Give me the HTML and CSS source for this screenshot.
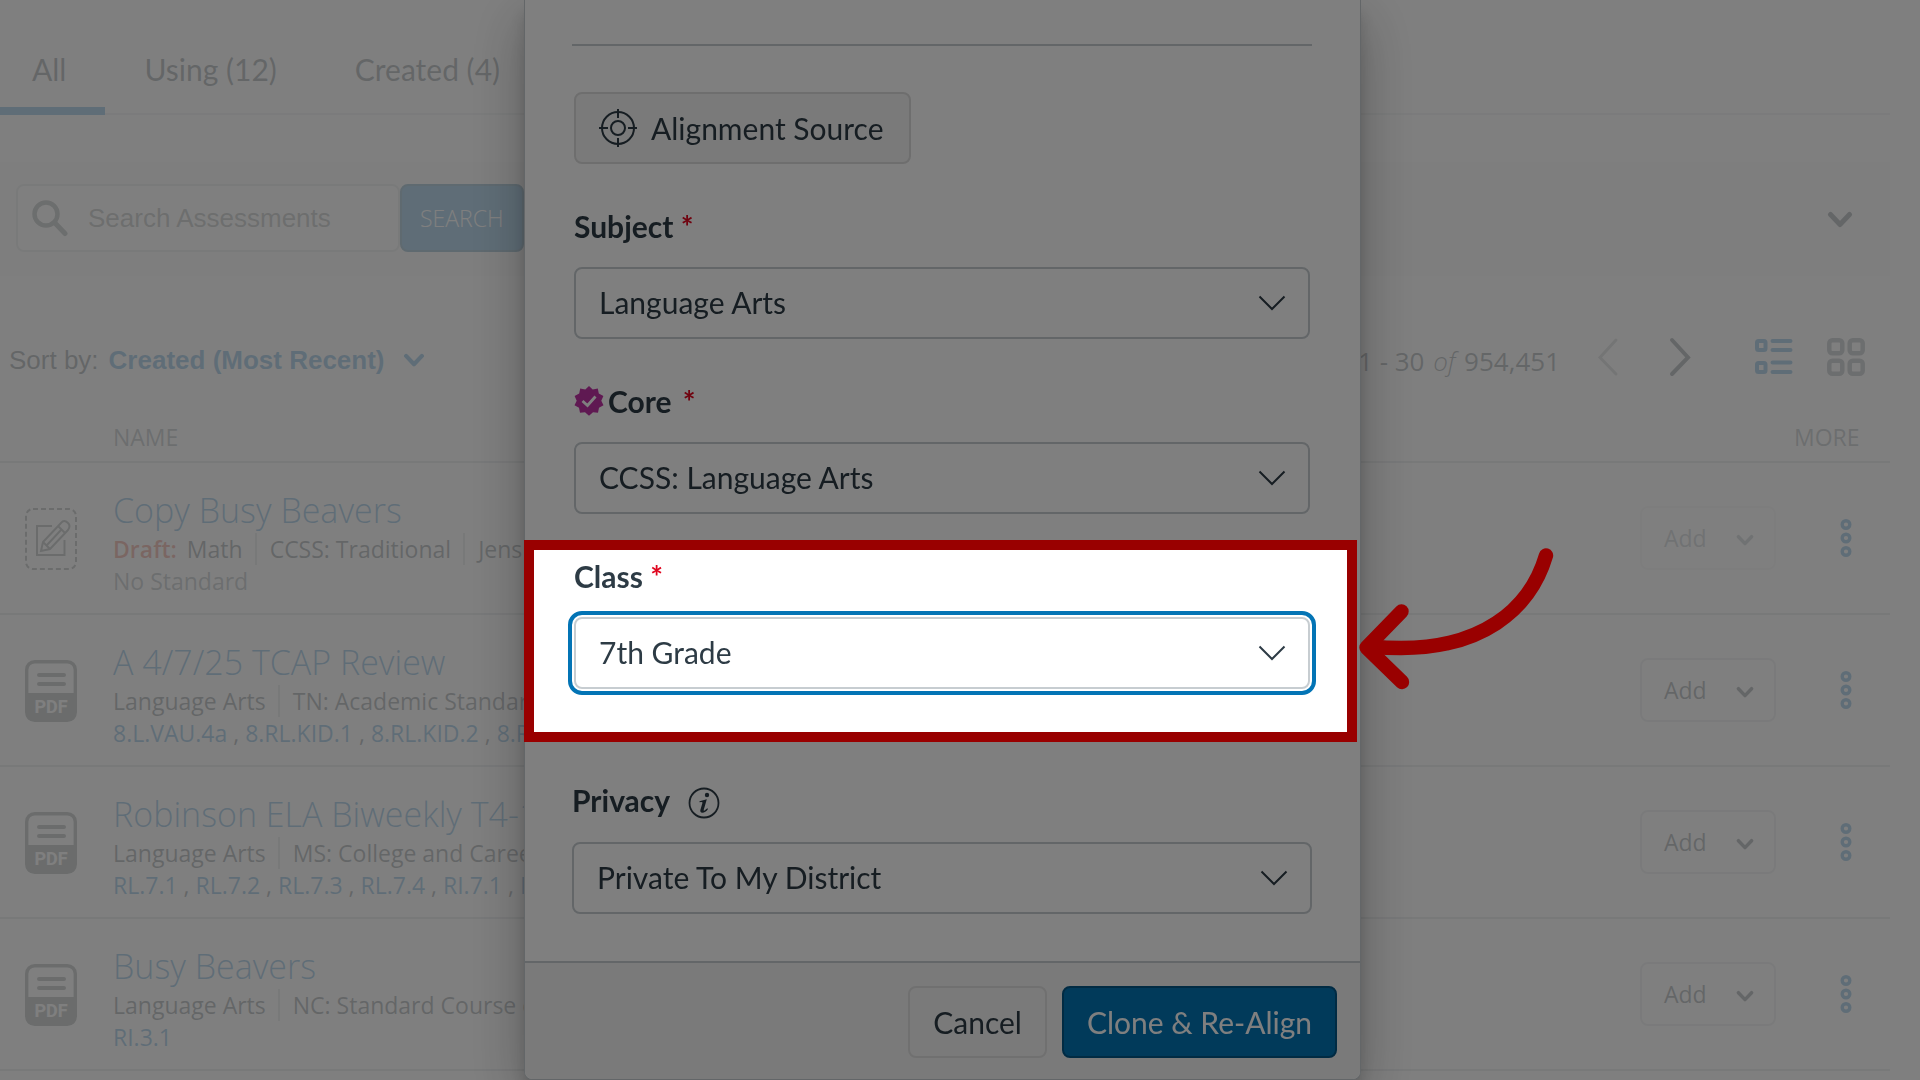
FILE: index.html
```html
<!DOCTYPE html>
<html lang="en">
<head>
  <meta charset="UTF-8" />
  <meta name="viewport" content="width=device-width, initial-scale=1.0"/>
  <title>Assessments</title>
  <link rel="stylesheet" href="styles.css">
</head>
<body>
  <!-- shared icons -->
  <svg width="0" height="0" class="sprite" aria-hidden="true">
    <symbol id="chevron-bold" viewBox="0 0 26 18">
      <path d="M3.500 3.500 L13 13.500 L22.500 3.500" fill="none" stroke="currentColor" stroke-width="5" stroke-linecap="round" stroke-linejoin="round"/>
    </symbol>
    <symbol id="chevron-thin" viewBox="0 0 28 16">
      <path d="M1.500 1.500 L14 14 L26.500 1.500" fill="none" stroke="currentColor" stroke-width="2"/>
    </symbol>
    <symbol id="more" viewBox="0 0 12 40">
      <g fill="none" stroke="currentColor" stroke-width="3.400">
        <circle cx="6" cy="6.500" r="3.800"/>
        <circle cx="6" cy="20" r="3.800"/>
        <circle cx="6" cy="33.500" r="3.800"/>
      </g>
    </symbol>
    <symbol id="pdf" viewBox="0 0 52 62">
      <rect x="1.700" y="1.700" width="48.600" height="58.600" rx="8" fill="none" stroke="currentColor" stroke-width="3.400"/>
      <path d="M1 33 H51 V53 Q51 61 43 61 H9 Q1 61 1 53 Z" fill="currentColor"/>
      <path d="M14 15 H39 M14 24 H39" stroke="currentColor" stroke-width="4" stroke-linecap="round"/>
    </symbol>
  </svg>

  <main class="page">
    <nav class="tabs">
      <button class="tab active">All</button>
      <button class="tab">Using (12)</button>
      <button class="tab">Created (4)</button>
    </nav>

    <section class="search-panel">
      <label class="search-box">
        <svg width="36" height="38" viewBox="0 0 36 38" fill="none" stroke="currentColor">
          <circle cx="14" cy="15" r="11.500" stroke-width="4.500"/>
          <path d="M22.500 23.500 L33 34.500" stroke-width="5" stroke-linecap="round"/>
        </svg>
        <input type="text" placeholder="Search Assessments" aria-label="Search Assessments">
      </label>
      <button class="search-btn">SEARCH</button>
      <button class="expand" aria-label="Expand filters"><svg width="26" height="18"><use href="#chevron-bold"/></svg></button>
    </section>

    <section class="toolbar">
      <span class="sort-label">Sort by:</span>
      <button class="sort-btn">Created (Most Recent) <svg width="22" height="15"><use href="#chevron-bold"/></svg></button>
      <div class="pager">
        <span class="range">1 - 30 <em>of</em> 954,451</span>
        <button class="prev" aria-label="Previous page" disabled>
          <svg width="22" height="40" viewBox="0 0 22 40" fill="none" stroke="currentColor" stroke-width="3" stroke-linecap="round"><path d="M19 3 L3 20.500 L19 37"/></svg>
        </button>
        <button class="next" aria-label="Next page">
          <svg width="22" height="40" viewBox="0 0 22 40" fill="none" stroke="currentColor" stroke-width="4" stroke-linecap="round"><path d="M3 3 L19 20.500 L3 37"/></svg>
        </button>
        <button class="view-list" aria-label="List view">
          <svg width="38" height="38" viewBox="0 0 38 38" fill="none" stroke="currentColor" stroke-width="4" stroke-linecap="round">
            <rect x="2" y="3" width="8.500" height="9" rx="1.500"/>
            <rect x="2" y="25" width="8.500" height="9" rx="1.500"/>
            <path d="M17.500 3 H35.500 M17.500 12 H35.500 M17.500 24.500 H35.500 M17.500 34 H35.500"/>
          </svg>
        </button>
        <button class="view-grid" aria-label="Grid view">
          <svg width="38" height="40" viewBox="0 0 38 40" fill="none" stroke="currentColor" stroke-width="4.500">
            <rect x="2.300" y="3.300" width="13" height="13" rx="3"/>
            <rect x="22.700" y="3.300" width="13" height="13" rx="3"/>
            <rect x="2.300" y="23.700" width="13" height="13" rx="3"/>
            <rect x="22.700" y="23.700" width="13" height="13" rx="3"/>
          </svg>
        </button>
      </div>
    </section>

    <table class="list">
      <thead>
        <tr>
          <th class="col-icon"></th>
          <th>NAME</th>
          <th class="col-add"></th>
          <th class="col-more">MORE</th>
        </tr>
      </thead>
      <tbody>
        <tr>
          <td class="col-icon">
            <svg width="52" height="62" viewBox="0 0 52 62" fill="none" stroke="currentColor" stroke-width="2">
              <rect x="1" y="1" width="50" height="60" rx="7" stroke-dasharray="5 3"/>
              <path d="M27 18 H12 V47 H39.500 V32"/>
              <path d="M16 43 L18 34 L36 15 Q39 11 43 15 Q46 18 43 22 L25 41 Z M18 34 L25 41 M33 18 L40 25 M22 37 L36 22"/>
            </svg>
          </td>
          <td class="col-name">
            <a href="#" class="title">Copy Busy Beavers</a>
            <div class="meta"><b>Draft:</b><span>Math</span><span>CCSS: Traditional</span><span>Jens</span></div>
            <div class="standards none">No Standard</div>
          </td>
          <td class="col-add"><button class="add-btn" disabled>Add <svg width="18" height="13"><use href="#chevron-bold"/></svg></button></td>
          <td class="col-more"><button class="more-btn" aria-label="More"><svg width="12" height="40"><use href="#more"/></svg></button></td>
        </tr>
        <tr>
          <td class="col-icon"><div class="pdf-icon"><svg width="52" height="62"><use href="#pdf"/></svg><span>PDF</span></div></td>
          <td class="col-name">
            <a href="#" class="title">A 4/7/25 TCAP Review</a>
            <div class="meta"><span>Language Arts</span><span>TN: Academic Standards</span></div>
            <div class="standards"><a href="#">8.L.VAU.4a</a> , <a href="#">8.RL.KID.1</a> , <a href="#">8.RL.KID.2</a> , <a href="#">8.RL.KID.3</a></div>
          </td>
          <td class="col-add"><button class="add-btn">Add <svg width="18" height="13"><use href="#chevron-bold"/></svg></button></td>
          <td class="col-more"><button class="more-btn" aria-label="More"><svg width="12" height="40"><use href="#more"/></svg></button></td>
        </tr>
        <tr>
          <td class="col-icon"><div class="pdf-icon"><svg width="52" height="62"><use href="#pdf"/></svg><span>PDF</span></div></td>
          <td class="col-name">
            <a href="#" class="title">Robinson ELA Biweekly T4-1</a>
            <div class="meta"><span>Language Arts</span><span>MS: College and Career</span></div>
            <div class="standards"><a href="#">RL.7.1</a> , <a href="#">RL.7.2</a> , <a href="#">RL.7.3</a> , <a href="#">RL.7.4</a> , <a href="#">RI.7.1</a> , <a href="#">RI.7.2</a></div>
          </td>
          <td class="col-add"><button class="add-btn">Add <svg width="18" height="13"><use href="#chevron-bold"/></svg></button></td>
          <td class="col-more"><button class="more-btn" aria-label="More"><svg width="12" height="40"><use href="#more"/></svg></button></td>
        </tr>
        <tr>
          <td class="col-icon"><div class="pdf-icon"><svg width="52" height="62"><use href="#pdf"/></svg><span>PDF</span></div></td>
          <td class="col-name">
            <a href="#" class="title">Busy Beavers</a>
            <div class="meta"><span>Language Arts</span><span>NC: Standard Course of Study</span></div>
            <div class="standards"><a href="#">RI.3.1</a></div>
          </td>
          <td class="col-add"><button class="add-btn">Add <svg width="18" height="13"><use href="#chevron-bold"/></svg></button></td>
          <td class="col-more"><button class="more-btn" aria-label="More"><svg width="12" height="40"><use href="#more"/></svg></button></td>
        </tr>
      </tbody>
    </table>
  </main>

  <div class="overlay">
    <div class="modal" role="dialog" aria-label="Clone and Re-Align">
      <div class="modal-body">
        <hr>
        <div class="align-form">
          <button class="btn source-btn">
            <svg width="38" height="38" viewBox="0 0 38 38" fill="none" stroke="currentColor" stroke-width="2">
              <circle cx="19" cy="19" r="16"/>
              <circle cx="19" cy="19" r="7"/>
              <path d="M19 0 V9 M19 29 V38 M0 19 H9 M29 19 H38"/>
            </svg>
            Alignment Source
          </button>

          <div class="field">
            <label for="subject">Subject <i>*</i></label>
            <div class="select">
              <select id="subject"><option>Language Arts</option></select>
              <svg width="28" height="16"><use href="#chevron-thin"/></svg>
            </div>
          </div>

          <div class="field">
            <label for="core" class="core-label">
              <svg class="badge" width="30" height="30" viewBox="0 0 30 30">
                <path fill="#bf32a4" d="M15 0 L18.700 3.500 L23.800 2.600 L24.800 7.600 L29.400 10 L27.300 14.700 L29.500 19.300 L25 21.700 L24 26.700 L19 26.200 L15 29.700 L11 26.200 L6 26.700 L5 21.700 L0.500 19.300 L2.700 14.700 L0.600 10 L5.200 7.600 L6.200 2.600 L11.300 3.500 Z"/>
                <path d="M8.500 15 L13.500 19.500 L21.500 10.500" fill="none" stroke="#fff" stroke-width="2.800"/>
              </svg>Core <i>*</i>
            </label>
            <div class="select">
              <select id="core"><option>CCSS: Language Arts</option></select>
              <svg width="28" height="16"><use href="#chevron-thin"/></svg>
            </div>
          </div>

          <div class="field">
            <label for="class">Class <i>*</i></label>
            <div class="select focused">
              <select id="class"><option>7th Grade</option></select>
              <svg width="28" height="16"><use href="#chevron-thin"/></svg>
            </div>
            <div class="spotlight">
              <svg class="arrow" width="200" height="150" viewBox="0 0 200 150" fill="none" stroke="#990000" stroke-width="14.400" stroke-linecap="round" stroke-linejoin="round">
                <path d="M189 10.500 C175 58 129 113 14 101.500"/>
                <path d="M44.500 66.500 L9.500 102.500 L45 137"/>
              </svg>
            </div>
          </div>
        </div>

        <div class="field privacy">
          <div class="label-row">
            <label for="privacy">Privacy</label>
            <svg class="info" width="32" height="32" viewBox="0 0 32 32">
              <circle cx="16" cy="16" r="14.500" fill="none" stroke="currentColor" stroke-width="1.800"/>
              <circle cx="19" cy="8" r="2.200" fill="currentColor"/>
              <path d="M11.500 14.300 L18.800 12.300 L15.700 23 Q15.500 24 16.500 23.600 L19.300 21.200 L20 22 Q17.500 25.800 14.300 25.800 Q11.600 25.600 12.500 22.500 L14.500 15.700 Q14.600 14.800 11.500 15.300 Z" fill="currentColor"/>
            </svg>
          </div>
          <div class="select">
            <select id="privacy"><option>Private To My District</option></select>
            <svg width="28" height="16"><use href="#chevron-thin"/></svg>
          </div>
        </div>
      </div>

      <footer class="modal-footer">
        <button class="btn">Cancel</button>
        <button class="btn primary">Clone &amp; Re-Align</button>
      </footer>
    </div>
  </div>
</body>
</html>
```
FILE: styles.css
```css
* {
  box-sizing: border-box;
}

body {
  margin: 0;
  height: 100vh;
  overflow: hidden;
  background: #fff;
  color: #2d3b45;
  font-family: "Open Sans", sans-serif;
  font-size: 23px;
}

button,
input,
select {
  font: inherit;
  color: inherit;
  background: none;
  border: none;
  margin: 0;
  padding: 0;
}

a {
  color: #0770bb;
  text-decoration: none;
}

svg {
  display: block;
  flex: none;
}

.sprite {
  position: absolute;
}

.page {
  margin-right: 30px;
}

/* Tabs */
.tabs {
  display: flex;
  height: 115px;
  border-bottom: 2px solid #dde0e2;
  font-family: Lato, sans-serif;
  font-size: 30px;
}

.tab {
  height: 115px;
  padding: 30px 39px 0;
  border-bottom: 8px solid transparent;
}

.tab.active {
  padding-left: 32px;
  border-bottom-color: #0770bb;
}

/* Search */
.search-panel {
  display: flex;
  align-items: center;
  height: 114px;
  margin-top: 47px;
  padding: 0 37px 2px 16px;
  background: #f5f5f5;
}

.search-box {
  display: flex;
  align-items: center;
  gap: 20px;
  width: 384px;
  height: 68px;
  padding: 0 14px;
  border: 2px solid #d0d4d4;
  border-radius: 8px;
  background: #fff;
  color: #6b7676;
}

.search-box input {
  flex: 1;
  min-width: 0;
  font-family: "Liberation Sans", Arial, sans-serif;
  font-size: 26px;
}

.search-box input::placeholder {
  color: #707878;
  opacity: 1;
}

.search-btn {
  height: 68px;
  padding: 0 18px;
  border: 2px solid #025687;
  border-radius: 8px;
  background: #0770bb;
  color: #fff;
  font-weight: 300;
}

.expand {
  margin-left: auto;
  padding-top: 4px;
}

/* Sort and pager */
.toolbar {
  display: flex;
  align-items: center;
  gap: 10px;
  height: 123px;
  padding: 38px 25px 0 9px;
  font-family: "Liberation Sans", Arial, sans-serif;
  font-size: 26px;
}

.sort-label,
.sort-btn,
.range {
  padding-top: 8px;
}

.sort-btn {
  display: flex;
  align-items: center;
  gap: 18px;
  color: #0770bb;
  font-weight: bold;
}

.pager {
  display: flex;
  align-items: center;
  margin-left: auto;
  font-family: "Open Sans", sans-serif;
}

.pager em {
  margin: 0 2px;
  font-weight: 300;
}

.prev {
  margin-left: 37px;
  color: #a8adb0;
}

.next {
  margin-left: 50px;
}

.view-list {
  margin-left: 64px;
  color: #0770bb;
}

.view-grid {
  margin-left: 34px;
  color: #6b7780;
}

/* Assessment list */
.list {
  width: 100%;
  table-layout: fixed;
  border-spacing: 0;
}

.list th {
  height: 64px;
  padding: 0 0 8px;
  border-bottom: 2px solid #c7cdd1;
  color: #6b7780;
  font-weight: 400;
  line-height: 32px;
  text-align: left;
  vertical-align: bottom;
}

.list td {
  height: 152px;
  padding: 0;
  border-bottom: 2px solid #c7cdd1;
}

.list .col-icon {
  width: 113px;
  padding-top: 2px;
  padding-left: 25px;
  color: #5f6b6b;
}

.list .col-name {
  padding-top: 25px;
  vertical-align: top;
  white-space: nowrap;
  overflow: hidden;
}

.list .col-add {
  width: 160px;
}

.list .col-more {
  width: 100px;
}

.list th.col-more {
  padding-left: 4px;
}

.list td.col-more {
  padding-left: 50px;
}

.title {
  display: block;
  font-size: 34px;
  font-weight: 300;
  line-height: 45px;
}

.meta,
.standards {
  line-height: 32px;
}

.meta b {
  margin-right: 10px;
  color: #d8381b;
  font-weight: 600;
}

.meta span + span {
  margin-left: 12px;
  padding-left: 13px;
  border-left: 2px solid #c7cdd1;
}

.standards.none {
  color: #6b7780;
}

.pdf-icon {
  position: relative;
  width: 52px;
}

.pdf-icon span {
  position: absolute;
  bottom: 3px;
  left: 0;
  width: 100%;
  color: #fff;
  font-family: Roboto, sans-serif;
  font-size: 18px;
  font-weight: bold;
  line-height: 24px;
  text-align: center;
}

.add-btn {
  display: flex;
  align-items: center;
  justify-content: space-between;
  width: 136px;
  height: 64px;
  margin-left: 10px;
  padding: 0 20px 0 22px;
  border: 2px solid #d5d9dc;
  border-radius: 8px;
}

.add-btn svg {
  margin-top: 4px;
}

.add-btn:disabled {
  border-color: #eceeef;
  color: #8b969e;
}

.more-btn {
  display: block;
  color: #0770bb;
}

/* Modal */
.overlay {
  position: fixed;
  inset: 0;
  display: flex;
  align-items: flex-end;
  justify-content: center;
  padding-right: 35px;
  background: rgba(255, 255, 255, 0.75);
  font-family: Lato, sans-serif;
  font-size: 30px;
  line-height: 36px;
}

.modal {
  display: flex;
  flex-direction: column;
  width: 837px;
  height: 100%;
  border: 1px solid #c7cdd1;
  border-top: none;
  border-radius: 0 0 8px 8px;
  background: #fff;
  box-shadow: 0 12px 14px rgba(0, 0, 0, 0.13), 0 20px 56px rgba(0, 0, 0, 0.27);
}

.modal-body {
  flex: 1;
  padding: 44px 48px 0 47px;
}

.modal-body hr {
  height: 2px;
  margin: 0;
  border: none;
  background: #c7cdd1;
}

.align-form {
  padding: 46px 2px 0;
}

.btn {
  display: flex;
  align-items: center;
  height: 72px;
  padding: 0 23px;
  border: 2px solid #e0e0e0;
  border-radius: 8px;
}

.source-btn {
  gap: 14px;
  padding-right: 26px;
  border-color: #dcdcdc;
  background: #f5f5f5;
}

.field {
  position: relative;
  margin-top: 44px;
}

.field label {
  display: flex;
  align-items: center;
  height: 36px;
  font-weight: bold;
  white-space: pre;
}

.field i {
  color: #e0061f;
  font-style: normal;
}

.core-label i {
  margin-left: 4px;
}

.badge {
  margin-right: 4px;
}

.select {
  position: relative;
  margin-top: 23px;
}

.select select {
  display: block;
  width: 100%;
  height: 72px;
  padding: 0 23px 2px;
  border: 2px solid #c7cdd1;
  border-radius: 8px;
  appearance: none;
}

.select svg {
  position: absolute;
  top: 28px;
  right: 24px;
  pointer-events: none;
}

.focused select {
  outline: 4px solid #0374b5;
  outline-offset: 2px;
}

.privacy {
  margin-top: 92px;
}

.label-row {
  display: flex;
  align-items: center;
  gap: 18px;
  height: 38px;
}

.info {
  margin-top: 6px;
}

.modal-footer {
  display: flex;
  justify-content: flex-end;
  gap: 15px;
  height: 118px;
  padding: 23px;
  border-top: 2px solid #c7cdd1;
  border-radius: 0 0 8px 8px;
  background: #f5f5f5;
}

.btn.primary {
  border-color: #025687;
  background: #0374b5;
  color: #fff;
}

/* Frame round the class field, everything else is dimmed */
.spotlight {
  position: absolute;
  z-index: 5;
  top: -18px;
  right: -47px;
  bottom: -53px;
  left: -50px;
  border: 10px solid #990000;
  box-shadow: 0 0 0 9999px rgba(0, 0, 0, 0.5);
  pointer-events: none;
}

.arrow {
  position: absolute;
  top: -5px;
  left: calc(100% + 10px);
}
```
